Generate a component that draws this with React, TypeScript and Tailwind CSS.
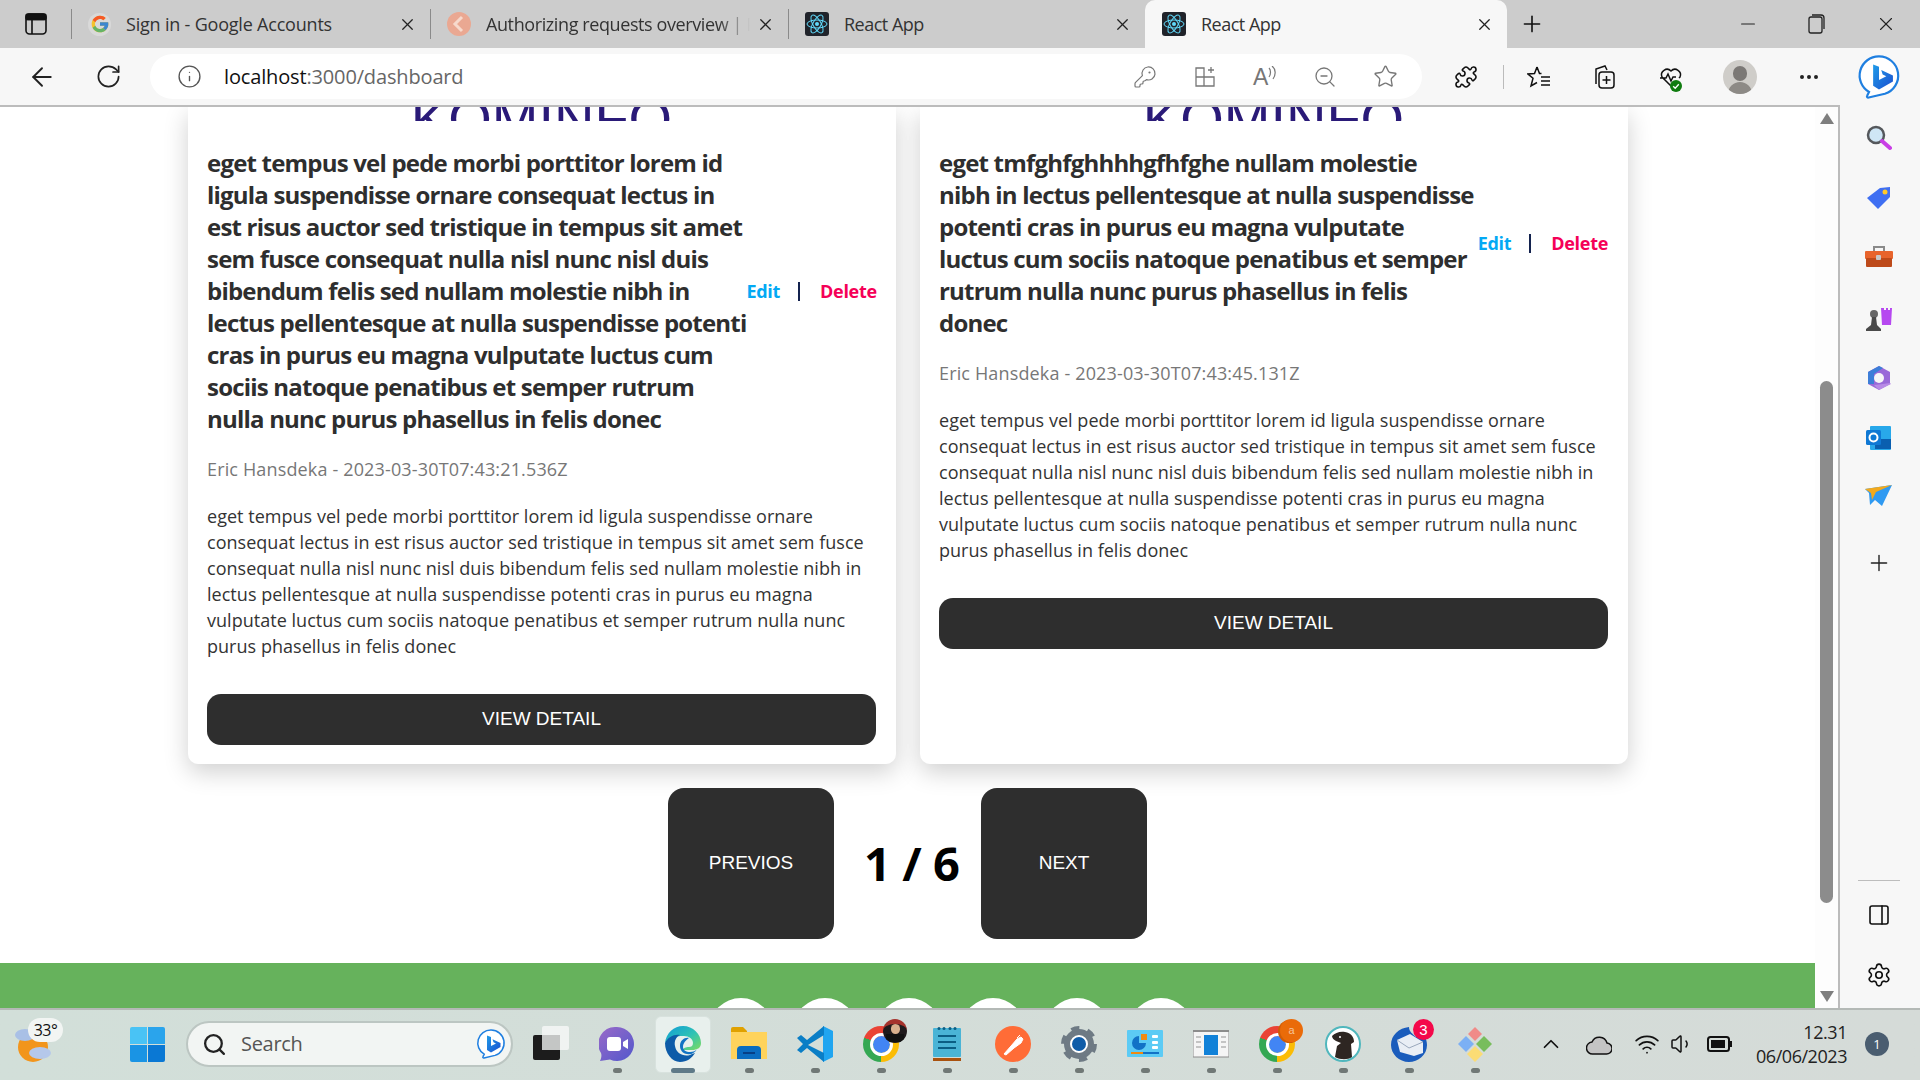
import { ArrowLeft, ChevronUp, Info, KeyRound, Minus, MoreHorizontal, PanelRight, Plus, Puzzle, RotateCw, Search, Settings, Star, Volume1, Wifi, X, ZoomOut } from "lucide-react";
import { FcGoogle } from "react-icons/fc";

const ui = "font-['Open_Sans',sans-serif]";
const arial = "font-['Liberation_Sans',Arial,sans-serif]";

function ReactIcon({ size = 24 }: { size?: number }) {
  return (
    <svg width={size} height={size} viewBox="0 0 24 24" className="shrink-0">
      <rect width="24" height="24" rx="3" fill="#20232a" />
      <g fill="none" stroke="#61dafb" strokeWidth="1">
        <ellipse cx="12" cy="12" rx="10" ry="4" />
        <ellipse cx="12" cy="12" rx="10" ry="4" transform="rotate(60 12 12)" />
        <ellipse cx="12" cy="12" rx="10" ry="4" transform="rotate(120 12 12)" />
      </g>
      <circle cx="12" cy="12" r="2" fill="#61dafb" />
    </svg>
  );
}

function Tab({ title, icon, width, active, fade, titleClass = "tracking-[-0.4px]" }: { title: string; icon: React.ReactNode; width: string; active?: boolean; fade?: boolean; titleClass?: string }) {
  return (
    <div className={`${width} h-12 flex items-center shrink-0 ${active ? "bg-[#f7f7f7] rounded-t-[10px]" : ""}`}>
      {!active && <span className="w-px h-[30px] bg-[#8a8a8a] mr-[16px]" />}
      {active && <span className="w-[17px]" />}
      {icon}
      <span
        className={`ml-[15px] flex-1 min-w-0 whitespace-nowrap overflow-hidden text-[18px] text-[#333] ${titleClass} ${ui} ${fade ? "[mask-image:linear-gradient(to_right,black_88%,transparent)]" : ""}`}
      >
        {title}
      </span>
      <X size={19} strokeWidth={1.6} className="text-[#222] ml-[6px] mr-[13px] shrink-0" />
    </div>
  );
}

function EdgeIcon() {
  return (
    <svg width="36" height="36" viewBox="0 0 36 36">
      <defs>
        <linearGradient id="edgeTop" x1="0" y1="0" x2="1" y2="1">
          <stop offset="0" stopColor="#0f9bd8" />
          <stop offset="0.55" stopColor="#2fc3b4" />
          <stop offset="1" stopColor="#7edb5e" />
        </linearGradient>
      </defs>
      <path d="M0 17C1 7 9 0 18 0c10 0 18 8 18 17 0 5-4 7-9 7h-9c0-2 3-3 6-3 2 0 4-1 4-4 0-4-4-7-9-7C9 10 3 12 0 17Z" fill="url(#edgeTop)" />
      <path d="M0 17C3 11 9 8 15 9c-4 2-6 6-5 11 1 7 8 11 15 9 2-1 4-2 5-2-3 5-8 9-15 9C7 36 0 27 0 17Z" fill="#0d5ba8" />
      <path d="M15 20c0-6 5-9 9-8-3 2-6 5-6 9 0 3 3 5 7 5 3 0 6-1 7-3-2 4-6 6-10 5-4 0-7-4-7-8Z" fill="#1273c4" />
    </svg>
  );
}

function BingIcon({ size = 30 }: { size?: number }) {
  return (
    <svg width={size} height={size} viewBox="0 0 30 30">
      <defs>
        <linearGradient id={`bingB${size}`} x1="0" y1="0" x2="1" y2="1">
          <stop offset="0" stopColor="#1f9be8" />
          <stop offset="1" stopColor="#1b4fd0" />
        </linearGradient>
      </defs>
      <path d="M15 1a13 13 0 0 1 4 25.4L8 29c-1 .2-1.5-.6-1-1.4l1.2-2.4A13 13 0 0 1 15 1Z" fill="#fff" stroke="#1f7fe0" strokeWidth="1.5" />
      <path d="M11 6.500l4 1.500v9l5-2.500-2.500-1.200-1-3 8 3.600V18l-9.500 5.500L11 21Z" fill={`url(#bingB${size})`} />
    </svg>
  );
}

function ChromeIcon({ badge }: { badge: React.ReactNode }) {
  return (
    <div className="relative w-9 h-9">
      <div className="w-9 h-9 rounded-full bg-[conic-gradient(from_-70deg,#ea4335_0deg_130deg,#fbbc05_130deg_250deg,#34a853_250deg_360deg)] flex items-center justify-center">
        <div className="w-[17px] h-[17px] rounded-full bg-[#4285f4] outline-[3px] outline-white" />
      </div>
      {badge}
    </div>
  );
}

const taskIcons: React.ReactNode[] = [
  <svg width="36" height="36" viewBox="0 0 36 36" key="taskview">
    <rect x="0" y="9" width="27" height="25" rx="2" fill="#1c1c1c" />
    <rect x="9" y="0" width="27" height="24" rx="2" fill="#fafafa" fillOpacity="0.75" />
    <rect x="9" y="9" width="18" height="15" fill="#c4c6c5" />
  </svg>,
  <svg width="36" height="36" viewBox="0 0 36 36" key="meet">
    <defs>
      <linearGradient id="meetG" x1="0" y1="0" x2="1" y2="1">
        <stop offset="0" stopColor="#9a6ac8" />
        <stop offset="1" stopColor="#5258cc" />
      </linearGradient>
    </defs>
    <path d="M18 1a17 17 0 1 1-7 32.500L1 35c1-2 2-5 1-8A17 17 0 0 1 18 1Z" fill="url(#meetG)" />
    <rect x="8" y="11" width="14" height="14" rx="3" fill="#fff" />
    <path d="M24 16l5-3v10l-5-3Z" fill="#fff" />
  </svg>,
  <EdgeIcon key="edge" />,
  <svg width="36" height="36" viewBox="0 0 36 36" key="folder">
    <path d="M0 3a2 2 0 0 1 2-2h10l4 4v4H0Z" fill="#e0a100" />
    <path d="M0 6h36v27H0Z" fill="#ffd35c" />
    <path d="M6 33v-9a4 4 0 0 1 4-4h16a4 4 0 0 1 4 4v9Z" fill="#0a6cc0" />
    <rect x="12" y="26" width="12" height="2" fill="#063f86" />
  </svg>,
  <svg width="36" height="36" viewBox="0 0 36 36" key="vscode">
    <path d="M26 0l10 5v26l-10 5Z" fill="#20a5f0" />
    <path d="M27 0v9L11 19l16 8v9L10 22l-6 5-4-3 6-6-6-6 4-3 6 5Z" fill="#0a7ec6" />
  </svg>,
  <ChromeIcon
    key="chrome1"
    badge={
      <span className="absolute -top-[7px] -right-[8px] w-6 h-6 rounded-full bg-[#1f1a1c] overflow-hidden flex flex-col items-center border-t-[5px] border-[#a5322c]">
        <span className="w-[9px] h-[10px] rounded-full bg-[#d9b08e]" />
        <span className="w-[18px] h-2 bg-[#111]" />
      </span>
    }
  />,
  <svg width="28" height="36" viewBox="0 0 28 36" key="notepad">
    <rect x="0" y="2" width="28" height="29" rx="1" fill="#4ab4d6" />
    <rect x="0" y="32" width="28" height="3" fill="#a9520f" />
    <g fill="#0b5e84">
      <circle cx="6" cy="2.500" r="1.500" /><circle cx="11" cy="2.500" r="1.500" /><circle cx="17" cy="2.500" r="1.500" /><circle cx="22" cy="2.500" r="1.500" />
      <rect x="5" y="9" width="18" height="2" /><rect x="5" y="15" width="18" height="2" /><rect x="5" y="21" width="18" height="2" />
    </g>
  </svg>,
  <svg width="36" height="36" viewBox="0 0 36 36" key="postman">
    <circle cx="18" cy="18" r="18" fill="#ff6c37" />
    <path d="M9 28l7-8 6-7 4-2 2 2-2 4-7 5-8 7ZM22 12l3-3" fill="#fff" stroke="#fff" strokeWidth="1" />
  </svg>,
  <svg width="36" height="36" viewBox="0 0 36 36" key="settings">
    <circle cx="18" cy="18" r="12" fill="#fff" stroke="#6e7a84" strokeWidth="6" />
    <circle cx="18" cy="18" r="15.500" fill="none" stroke="#6e7a84" strokeWidth="5" strokeDasharray="8 8.230" />
    <circle cx="18" cy="18" r="7" fill="#0f5ca8" />
  </svg>,
  <svg width="36" height="28" viewBox="0 0 36 28" key="control">
    <rect width="36" height="27" rx="1" fill="#5ccbf5" />
    <path d="M12 6a7 7 0 1 0 7 7h-7Z" fill="#1272c6" />
    <path d="M14 4h6v6h-6Z" fill="#f08a12" />
    <g fill="#fff"><rect x="25" y="5" width="6" height="3" rx="1" /><rect x="25" y="11" width="6" height="3" rx="1" /><rect x="25" y="16" width="6" height="3" rx="1" /></g>
    <rect x="4" y="22" width="12" height="2" fill="#f08a12" /><rect x="16" y="22" width="16" height="2" fill="#1272c6" />
  </svg>,
  <svg width="36" height="28" viewBox="0 0 36 28" key="window">
    <rect width="36" height="27" fill="#f5f5f5" stroke="#8c8c8c" />
    <rect width="36" height="2" fill="#8c8c8c" />
    <rect x="11" y="5" width="14" height="20" fill="#1181d8" />
    <g fill="#c4c4c4"><rect x="3" y="6" width="5" height="2" /><rect x="3" y="11" width="5" height="2" /><rect x="3" y="16" width="5" height="2" /><rect x="28" y="6" width="5" height="2" /><rect x="28" y="11" width="5" height="2" /><rect x="28" y="16" width="5" height="2" /></g>
  </svg>,
  <ChromeIcon
    key="chrome2"
    badge={
      <span className={`absolute -top-[7px] -right-[8px] w-[23px] h-[23px] rounded-full bg-[#ea6b09] shadow-[-2px_1px_0_#d15c05] text-[#f6c49a] text-[11px] text-center leading-[23px] ${arial}`}>a</span>
    }
  />,
  <svg width="36" height="36" viewBox="0 0 36 36" key="dbeaver">
    <circle cx="18" cy="18" r="17" fill="#fff" stroke="#50b7bd" strokeWidth="2" />
    <path d="M7 10c3-3 8-5 13-4 6 1 9 5 9 10l-3 2 1 13c-4 3-12 3-17 0l2-11 4-3-5-2c-2-1-4-3-4-5Z" fill="#2e2622" />
    <circle cx="15" cy="11" r="1" fill="#fff" />
  </svg>,
  <div className="relative w-9 h-9" key="thunderbird">
    <svg width="36" height="36" viewBox="0 0 36 36">
      <path d="M18 1C8 2 0 9 0 19c0 9 8 17 18 17 9 0 18-7 18-17 0-7-4-13-9-15 1 3 0 5-2 7-3-3-7-5-7-10Z" fill="#1a5cbc" />
      <path d="M6 14l13-6 13 8v11l-9 3-14-4Z" fill="#e9eef5" />
      <path d="M6 14l12 8 14-6" fill="none" stroke="#9aa8bc" strokeWidth="1" />
    </svg>
    <span className={`absolute -top-[7px] -right-[7px] w-[21px] h-[21px] rounded-full bg-[#f4084a] text-white text-[15px] text-center leading-[21px] ${arial}`}>3</span>
  </div>,
  <svg width="36" height="36" viewBox="0 0 36 36" key="gitk">
    <path d="M18 1l7 7-7 7-7-7Z" fill="#f08a88" />
    <path d="M9 10l8 8-8 8-8-8Z" fill="#7cb0f4" />
    <path d="M27 10l8 8-8 8-8-8Z" fill="#78bd5c" />
    <path d="M18 20l8 8-8 8-8-8Z" fill="#fbdc74" />
  </svg>,
];

function Card({ heading, body, meta }: { heading: string[]; body: string[]; meta: string }) {
  return (
    <div className={`bg-white rounded-b-[10px] shadow-[0_8px_24px_rgba(0,0,0,0.19)] pl-[19px] pr-[20px] pb-[19px] ${ui}`}>
      <div className="h-[14px] overflow-hidden flex justify-center">
        <span className={`block mt-[-20px] text-[56px] leading-[64px] text-[#2a1a78] ${arial}`}>KOMINFO</span>
      </div>
      <div className="mt-[26px] flex items-center justify-between">
        <h5 className="text-[24px] leading-[32px] font-bold tracking-[-0.8px] text-[#2e2e2e]">
          {heading.map((line) => (
            <span key={line} className="block whitespace-nowrap">{line}</span>
          ))}
        </h5>
        <div className="flex items-center text-[18px] font-bold tracking-[-0.3px]">
          <span className="text-[#03a9f4]">Edit</span>
          <span className="ml-[18px] mr-[20px] w-[2px] h-[19px] bg-[#14234f]" />
          <span className="text-[#f50057]">Delete</span>
        </div>
      </div>
      <p className="mt-[22px] text-[18px] leading-[24px] tracking-[0.15px] text-[#777]">{meta}</p>
      <p className="mt-[23px] text-[18px] leading-[25.9px] tracking-[0.03px] text-[#333]">
        {body.map((line) => (
          <span key={line} className="block whitespace-nowrap">{line}</span>
        ))}
      </p>
      <button className={`mt-[34.6px] w-[669px] h-[51px] bg-[#2e2e2e] rounded-[14px] text-white text-[19px] ${arial}`}>VIEW DETAIL</button>
    </div>
  );
}

const sideIcons: React.ReactNode[] = [
  <svg width="26" height="26" viewBox="0 0 26 26" key="s">
    <circle cx="10" cy="10" r="8" fill="#cfe6f5" stroke="#55585c" strokeWidth="2.500" />
    <path d="M16 16l8 7" stroke="#c93ee6" strokeWidth="4" strokeLinecap="round" />
  </svg>,
  <svg width="26" height="26" viewBox="0 0 26 26" key="t">
    <path d="M1 13L14 3l10-1v10L12 24Z" fill="#3f6ff2" />
    <circle cx="19" cy="7" r="2.500" fill="#ffc928" />
  </svg>,
  <svg width="28" height="24" viewBox="0 0 28 24" key="b">
    <path d="M9 6V2h10v4" fill="none" stroke="#8a8a8a" strokeWidth="2" />
    <rect y="6" width="28" height="8" rx="1" fill="#e8642c" />
    <rect x="1" y="13" width="26" height="9" rx="1" fill="#bd4a1a" />
    <rect x="11" y="10" width="5" height="5" rx="1" fill="#c8c8c8" />
  </svg>,
  <svg width="28" height="28" viewBox="0 0 28 28" key="c">
    <path d="M16 3h3v2h2V3h2v2h2V3h2l-1 17h-9Z" fill="#b648f0" />
    <circle cx="9" cy="9" r="4" fill="#666" />
    <path d="M7 12h4l1 8 4 4v2H1v-2l5-4Z" fill="#4a4a4a" />
  </svg>,
  <svg width="26" height="26" viewBox="0 0 26 26" key="m">
    <path d="M13 1l11 6v12l-11 6-11-6V7Z" fill="#9a6ad8" />
    <path d="M2 7l11-6 4 2-9 6v10l-6 0Z" fill="#3d7ed8" />
    <path d="M8 20l9-1 7-1 1 1-12 6Z" fill="#b88ae6" />
    <circle cx="13" cy="13" r="5" fill="#f7f7f7" />
  </svg>,
  <svg width="26" height="26" viewBox="0 0 26 26" key="o">
    <rect x="4" y="1" width="21" height="24" rx="1" fill="#28a8ea" />
    <path d="M9 14h16v10H9Z" fill="#0a5fb0" />
    <rect y="5" width="15" height="15" rx="1.500" fill="#0f78d4" />
    <circle cx="7.500" cy="12.500" r="4" fill="none" stroke="#fff" strokeWidth="2" />
  </svg>,
  <svg width="28" height="22" viewBox="0 0 28 22" key="p">
    <path d="M0 4l27-4-10 21-7-6-5 5-1-12Z" fill="#2f9af2" />
    <path d="M0 4l27-4-16 7-4 8-1-7Z" fill="#f2a91d" />
  </svg>,
];

export default function App() {
  return (
    <div className={`w-[1920px] h-[1080px] overflow-hidden flex flex-col bg-white ${ui}`}>
      {/* tab strip */}
      <div className="h-12 shrink-0 bg-[#cccccc] flex items-center">
        <div className="w-[71px] shrink-0 flex justify-center pb-[1px]">
          <svg width="22" height="22" viewBox="0 0 22 22" fill="none" stroke="#111" strokeWidth="1.600">
            <rect x="1" y="1" width="20" height="20" rx="3.500" />
            <path d="M1 6.500h20M7 6.500V21" />
            <rect x="1" y="1" width="20" height="5.500" rx="2" fill="#111" />
          </svg>
        </div>
        <Tab width="w-[359px]" titleClass="tracking-[-0.2px]" title="Sign in - Google Accounts" icon={<span className="shrink-0 w-[23px] h-[23px] rounded-full bg-[#ddd] flex items-center justify-center opacity-80"><FcGoogle size={20} /></span>} />
        <Tab
          width="w-[358px]"
          fade
          title="Authorizing requests overview | Postman"
          icon={
            <svg width="24" height="24" viewBox="0 0 24 24" className="shrink-0">
              <circle cx="12" cy="12" r="12" fill="#eaa892" />
              <path d="M15 5l-7 7 7 7" fill="none" stroke="#f7d9cc" strokeWidth="3" />
            </svg>
          }
        />
        <Tab width="w-[357px]" titleClass="tracking-[-0.5px]" title="React App" icon={<ReactIcon />} />
        <Tab width="w-[362px]" titleClass="tracking-[-0.5px]" active title="React App" icon={<ReactIcon />} />
        <Plus size={26} strokeWidth={1.5} className="ml-[12px] text-[#111]" />
        <div className="ml-auto flex items-center pr-[23px] text-[#222]">
          <Minus size={22} strokeWidth={1.2} />
          <svg width="22" height="22" viewBox="0 0 22 22" fill="none" stroke="#222" strokeWidth="1.300" className="ml-[46px]">
            <rect x="4" y="4" width="13" height="16" rx="2" />
            <path d="M7 2h9a3 3 0 0 1 3 3v11" />
          </svg>
          <X size={22} strokeWidth={1.2} className="ml-[48px]" />
        </div>
      </div>

      {/* toolbar */}
      <div className="h-[57px] shrink-0 bg-[#f7f7f7] flex items-center text-[#222]">
        <ArrowLeft size={30} strokeWidth={1.5} className="ml-[27px]" />
        <RotateCw size={27} strokeWidth={1.5} className="ml-[38px]" />
        <div className="ml-[28px] w-[1272px] h-[45px] bg-white rounded-full flex items-center">
          <Info size={25} strokeWidth={1.3} className="ml-[27px] text-[#555]" />
          <span className="ml-[22px] text-[20px] tracking-[-0.15px] flex-1 text-[#111]">
            localhost<span className="text-[#666]">:3000/dashboard</span>
          </span>
          <div className="flex items-center gap-[36px] pr-[24px] text-[#777]">
            <KeyRound size={24} strokeWidth={1.2} />
            <svg width="24" height="24" viewBox="0 0 24 24" fill="none" stroke="#777" strokeWidth="1.300">
              <path d="M3 3h8v18H3ZM3 12h18v9H11M15 5h6M18 2v6" />
            </svg>
            <span className="w-6 h-6 flex items-center">
              <span className={`text-[23px] leading-6 text-[#777] ${arial}`}>A</span>
              <svg width="9" height="14" viewBox="0 0 9 14" fill="none" stroke="#777" strokeWidth="1.200" className="-mt-[8px] shrink-0">
                <path d="M1 2c2 2 2 6 0 9M4 0c4 3 4 9 1 13" />
              </svg>
            </span>
            <ZoomOut size={24} strokeWidth={1.3} />
            <Star size={25} strokeWidth={1.3} />
          </div>
        </div>
        <Puzzle size={24} strokeWidth={1.6} className="ml-[32px] text-[#111]" />
        <span className="ml-[25px] w-[1px] h-[24px] bg-[#bbb]" />
        <svg width="24" height="24" viewBox="0 0 24 24" fill="none" stroke="#111" strokeWidth="1.500" className="ml-[23px]">
          <path d="M10 2l2.500 6.500 2 .1M10 2L7.500 8.500 1 9l5 4.300L4 21l6-3.500M14 12h9M14 16h9M14 20h9" />
        </svg>
        <svg width="26" height="26" viewBox="0 0 26 26" fill="none" stroke="#111" strokeWidth="1.500" className="ml-[40px]">
          <path d="M5 20V5l9-3 2 4" />
          <rect x="8" y="8" width="15" height="16" rx="3" fill="#f7f7f7" />
          <path d="M15.500 12v8M11.500 16h8" />
        </svg>
        <div className="ml-[42px] relative w-6 h-6">
          <svg width="24" height="24" viewBox="0 0 24 24" fill="none" stroke="#111" strokeWidth="1.500">
            <path d="M12 21L3 12a5.500 5.500 0 0 1 9-6 5.500 5.500 0 0 1 9 6l-1 1M1 13h6l2-4 3 7 2-4h3" />
          </svg>
          <svg width="12" height="12" viewBox="0 0 12 12" className="absolute -bottom-[3px] right-[1px]">
            <circle cx="6" cy="6" r="6" fill="#107c10" />
            <path d="M3.200 6.200l2 2 3.600-4" fill="none" stroke="#fff" strokeWidth="1.300" />
          </svg>
        </div>
        <div className="ml-[40px] w-[34px] h-[34px] rounded-full bg-[#cfcdc9] overflow-hidden flex flex-col items-center justify-end">
          <span className="w-[14px] h-[15px] rounded-full bg-[#7b7875]" />
          <span className="mt-[1px] w-[24px] h-[12px] rounded-t-full bg-[#8d8a86]" />
        </div>
        <MoreHorizontal size={24} strokeWidth={2} className="ml-[40px] text-[#222]" />
        <div className="ml-[36px]"><BingIcon size={44} /></div>
      </div>

      {/* page + sidebar */}
      <div className="h-[903px] shrink-0 flex">
        <div className="w-[1840px] shrink-0 flex border-t-2 border-r-2 border-[#bcbcbc] bg-white">
          <div className="w-[1815px] shrink-0 overflow-hidden flex flex-col">
            <div className="ml-[188px] w-[1440px] grid grid-cols-2 gap-[24px]">
              <Card
                heading={[
                  "eget tempus vel pede morbi porttitor lorem id",
                  "ligula suspendisse ornare consequat lectus in",
                  "est risus auctor sed tristique in tempus sit amet",
                  "sem fusce consequat nulla nisl nunc nisl duis",
                  "bibendum felis sed nullam molestie nibh in",
                  "lectus pellentesque at nulla suspendisse potenti",
                  "cras in purus eu magna vulputate luctus cum",
                  "sociis natoque penatibus et semper rutrum",
                  "nulla nunc purus phasellus in felis donec",
                ]}
                meta="Eric Hansdeka - 2023-03-30T07:43:21.536Z"
                body={[
                  "eget tempus vel pede morbi porttitor lorem id ligula suspendisse ornare",
                  "consequat lectus in est risus auctor sed tristique in tempus sit amet sem fusce",
                  "consequat nulla nisl nunc nisl duis bibendum felis sed nullam molestie nibh in",
                  "lectus pellentesque at nulla suspendisse potenti cras in purus eu magna",
                  "vulputate luctus cum sociis natoque penatibus et semper rutrum nulla nunc",
                  "purus phasellus in felis donec",
                ]}
              />
              <Card
                heading={[
                  "eget tmfghfghhhhgfhfghe nullam molestie",
                  "nibh in lectus pellentesque at nulla suspendisse",
                  "potenti cras in purus eu magna vulputate",
                  "luctus cum sociis natoque penatibus et semper",
                  "rutrum nulla nunc purus phasellus in felis",
                  "donec",
                ]}
                meta="Eric Hansdeka - 2023-03-30T07:43:45.131Z"
                body={[
                  "eget tempus vel pede morbi porttitor lorem id ligula suspendisse ornare",
                  "consequat lectus in est risus auctor sed tristique in tempus sit amet sem fusce",
                  "consequat nulla nisl nunc nisl duis bibendum felis sed nullam molestie nibh in",
                  "lectus pellentesque at nulla suspendisse potenti cras in purus eu magna",
                  "vulputate luctus cum sociis natoque penatibus et semper rutrum nulla nunc",
                  "purus phasellus in felis donec",
                ]}
              />
            </div>

            <div className="mt-[24px] flex justify-center items-center">
              <button className={`w-[166px] h-[151px] rounded-[16px] bg-[#2e2e2e] text-white text-[19px] ${arial}`}>PREVIOS</button>
              <span className="ml-[30px] mr-[21px] w-[96px] whitespace-nowrap text-[47px] leading-none font-bold tracking-[-0.4px] text-black">1 / 6</span>
              <button className={`w-[166px] h-[151px] rounded-[16px] bg-[#2e2e2e] text-white text-[19px] ${arial}`}>NEXT</button>
            </div>

            <div className="mt-[24px] h-[45px] bg-[#66b25c] overflow-hidden flex gap-[20px] pl-[709px] pt-[35px]">
              {[0, 1, 2, 3, 4, 5].map((i) => (
                <span key={i} className="w-[64px] h-[64px] rounded-full bg-white shrink-0" />
              ))}
            </div>
          </div>

          {/* scrollbar */}
          <div className="w-[23px] shrink-0 bg-[#fdfdfd] flex flex-col items-center">
            <span className="mt-[6px] w-0 h-0 border-x-[7px] border-x-transparent border-b-[11px] border-b-[#7e7e7e]" />
            <span className="mt-[257px] w-[13px] h-[522px] rounded-full bg-[#8c8c8c]" />
            <span className="mt-auto mb-[6px] w-0 h-0 border-x-[7px] border-x-transparent border-t-[11px] border-t-[#7e7e7e]" />
          </div>
        </div>

        <div className="flex-1 bg-[#f7f7f7] flex flex-col items-center pt-[20px] pr-[2px]">
          <div className="flex flex-col items-center">
            {sideIcons.map((icon, i) => (
              <div key={i} className="h-[60px] flex items-start justify-center">{icon}</div>
            ))}
          </div>
          <Plus size={26} strokeWidth={1.3} className="mt-[5px] text-[#222]" />
          <div className="mt-auto flex flex-col items-center pb-[20px]">
            <span className="w-[42px] h-[1px] bg-[#bdbdbd]" />
            <PanelRight size={24} strokeWidth={1.6} className="mt-[22px] text-[#111]" />
            <Settings size={26} strokeWidth={1.5} className="mt-[35px] text-[#111]" />
          </div>
        </div>
      </div>

      {/* taskbar */}
      <div className={`h-[72px] shrink-0 border-t-2 border-[#b4b9b6] bg-gradient-to-r from-[#d2dfd9] to-[#d5dbd8] flex ${ui}`}>
        <div className="relative w-[130px] shrink-0">
          <svg width="36" height="40" viewBox="0 0 36 40" className="ml-[15px] mt-[14px]">
            <circle cx="18" cy="23" r="15" fill="#f2951c" />
            <ellipse cx="10" cy="11" rx="10" ry="6" fill="#a9c0e6" />
            <ellipse cx="25" cy="29" rx="11" ry="6" fill="#b5c8ea" />
          </svg>
          <span className="absolute left-[28px] top-[8px] w-[35px] h-[24px] rounded-full bg-[#f2f5f3] text-[16px] leading-[24px] text-center tracking-[-0.5px] text-[#111]">33°</span>
        </div>
        <div className="w-[35px] h-[35px] mt-[17px] shrink-0 grid grid-cols-2 gap-[1px]">
          <span className="rounded-tl-[2px] bg-[#49c3f5]" />
          <span className="rounded-tr-[2px] bg-[#2aa4ec]" />
          <span className="rounded-bl-[2px] bg-[#1a94e4]" />
          <span className="rounded-br-[2px] bg-[#0a78d4]" />
        </div>
        <div className="ml-[21px] w-[327px] h-[46px] mt-[11px] shrink-0 rounded-full bg-[#f2f5f3] border-2 border-[#bcc6c2] flex items-center">
          <Search size={25} strokeWidth={2.2} className="ml-[14px] text-[#222]" />
          <span className="ml-[14px] text-[20px] tracking-[-0.3px] text-[#555] flex-1">Search</span>
          <div className="mr-[5px]"><BingIcon size={30} /></div>
        </div>
        <div className="ml-[5px] flex">
          {taskIcons.map((icon, i) => (
            <div key={i} className="relative w-[66px] shrink-0 flex flex-col items-center">
              {i === 2 && <span className="absolute left-[5px] top-[6px] w-[56px] h-[57px] rounded-[6px] bg-[#e8f0ed] border border-[#d8e2de]" />}
              <div className="relative mt-[16px] h-[36px] flex items-center">{icon}</div>
              {i > 0 && (
                <span className={`relative mt-[6px] h-[5px] rounded-full ${i === 2 ? "w-[24px] bg-[#5f7a88]" : "w-[9px] bg-[#707876]"}`} />
              )}
            </div>
          ))}
        </div>
        <div className="flex-1 flex items-center pb-[2px] text-[#111]">
          <ChevronUp size={26} strokeWidth={1.6} className="ml-[30px]" />
          <svg width="26" height="22" viewBox="0 0 26 22" className="ml-[22px]">
            <path d="M7 21a6 6 0 0 1-1-12 8 8 0 0 1 15 1 5.500 5.500 0 0 1-1 11Z" fill="#c4c4c4" stroke="#111" strokeWidth="1.500" />
          </svg>
          <Wifi size={26} strokeWidth={1.6} className="ml-[22px]" />
          <Volume1 size={24} strokeWidth={1.5} className="ml-[10px]" />
          <svg width="26" height="16" viewBox="0 0 26 16" className="ml-[13px]">
            <rect x="1" y="1" width="21" height="14" rx="2.500" fill="none" stroke="#111" strokeWidth="2" />
            <rect x="4" y="4" width="14" height="8" fill="#111" />
            <rect x="23" y="5" width="2" height="6" fill="#111" />
          </svg>
          <div className="ml-auto text-right text-[18px] leading-[24px] tracking-[-0.45px] text-[#222]">
            <div>12.31</div>
            <div>06/06/2023</div>
          </div>
          <span className="ml-[18px] mr-[31px] w-6 h-6 rounded-full bg-[#4a5d70] text-white text-[13px] leading-6 text-center">1</span>
        </div>
      </div>
    </div>
  );
}
